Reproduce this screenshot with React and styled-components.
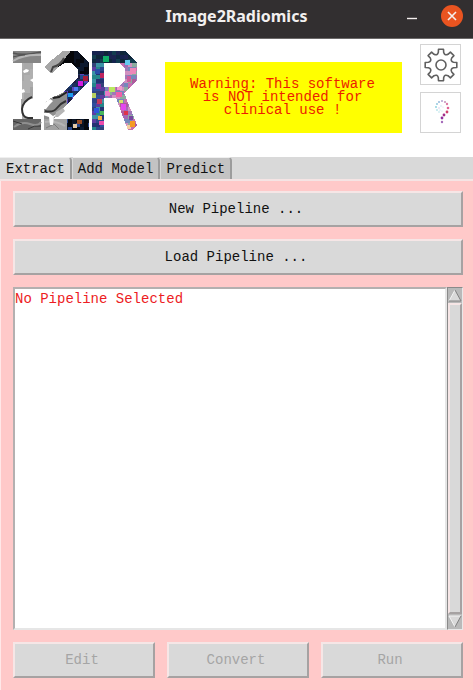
import React from "react";
import styled, { createGlobalStyle, css } from "styled-components";

const GlobalStyle = createGlobalStyle`
  *, *::before, *::after { box-sizing: border-box; }
  body { margin: 0; background: #ffc9c9; }
  button, textarea { font: inherit; }
`;

const Window = styled.div`
  display: flex;
  flex-direction: column;
  min-height: 100vh;
  font-family: "Liberation Mono", monospace;
  font-size: 14px;
  line-height: 16px;
  color: #111;
`;

const TitleBar = styled.header`
  display: grid;
  grid-template-columns: 72px 1fr 72px;
  align-items: center;
  height: 39px;
  padding-bottom: 6px;
  background: #322f30;
  border-bottom: 1px solid #6b6969;
`;

const Title = styled.h1`
  grid-column: 2;
  margin: 0;
  text-align: center;
  font: bold 16px/24px "Noto Sans", sans-serif;
  color: #f2f0ef;
`;

const WindowControls = styled.div`
  display: flex;
  align-items: center;
  justify-content: flex-end;
  gap: 23px;
  padding-right: 10px;
`;

const WindowButton = styled.button`
  display: grid;
  place-items: center;
  width: ${(p) => (p.$close ? "22px" : "12px")};
  height: 22px;
  padding: 0;
  border: 0;
  border-radius: ${(p) => (p.$close ? "50%" : "0")};
  color: #f5f0ee;
  background: ${(p) => (p.$close ? "#e95420" : "transparent")};
`;

const Banner = styled.section`
  display: flex;
  align-items: flex-start;
  height: 118px;
  padding: 5px 12px 0;
  background: #fff;
`;

const LogoArt = styled.svg`
  flex: none;
  margin-top: 7px;
`;

const Warning = styled.p`
  flex: 1;
  display: grid;
  place-items: center;
  height: 71px;
  margin: 18px 18px 0 27px;
  padding-right: 2px;
  background: #ff0;
  color: #ed1c00;
  line-height: 13px;
  text-align: center;
  white-space: pre-line;
`;

const ToolColumn = styled.div`
  display: grid;
  gap: 7px;
`;

const ToolButton = styled.button`
  display: grid;
  place-items: center;
  width: 41px;
  height: 41px;
  padding: 0;
  border: 1px solid #d4d4d4;
  background: #fff;
`;

const TabBar = styled.div`
  display: flex;
  height: 24px;
  background: #d9d9d9;
  border-bottom: 2px solid #f5e4e4;
`;

const Tab = styled.button`
  height: 22px;
  margin-right: 1px;
  padding: 0 5px;
  border: 0;
  border-top: 1px solid #efefef;
  border-right: 2px solid #9c9c9c;
  border-top-right-radius: 4px;
  background: ${(p) => (p.$active ? "#d9d9d9" : "#c3c3c3")};
  color: #111;
  &:first-child { padding-left: 6px; }
`;

const Panel = styled.main`
  flex: 1;
  display: flex;
  flex-direction: column;
  gap: 12px;
  padding: 10px 10px 12px 12px;
  border-left: 1px solid #ffe8e8;
`;

const raised = css`
  border: 2px solid;
  border-color: #f6e6e6 #a6a2a2 #a6a2a2 #f6e6e6;
`;

const PushButton = styled.button`
  flex: 1;
  height: 36px;
  padding: 0 4px 0 0;
  ${raised}
  background: #d9d9d9;
  color: #111;
  &:disabled { color: #a5a5a5; }
`;

const WideButton = styled(PushButton)`
  flex: none;
`;

const ListFrame = styled.div`
  flex: 1;
  display: flex;
  min-height: 120px;
`;

const ListText = styled.textarea`
  flex: 1;
  min-width: 0;
  padding: 2px 0;
  border: 2px solid;
  border-color: #b4b0b0 #e6e6e6 #e6e6e6 #b4b0b0;
  border-radius: 0;
  outline: 0;
  resize: none;
  overflow: hidden;
  background: #fff;
  color: #ed1c24;
`;

const ScrollBar = styled.div`
  display: flex;
  flex-direction: column;
  width: 16px;
  border: 1px solid;
  border-color: #8a8a8a #e8e8e8 #e8e8e8 #8a8a8a;
  background: #b9b9b9;
`;

const ScrollArrow = styled.button`
  height: 15px;
  padding: 0;
  border: 0;
  background: transparent;
  svg { display: block; }
`;

const ScrollThumb = styled.div`
  flex: 1;
  ${raised}
  background: #d9d9d9;
`;

const ButtonRow = styled.div`
  display: flex;
  gap: 12px;
`;

/* Slabs of the logo: top, bottom, then left and right edges at each of them. */
const SLABS = [
  [0, 12, 1, 29, 1, 29],
  [12, 48, 10, 21, 10, 21],
  [48, 68, 9, 21, 10, 21],
  [68, 79, 1, 29, 1, 29],

  [0, 12, 51, 66, 36, 77],
  [12, 16, 36, 53, 32, 46],
  [16, 22, 32, 46, 39, 40],
  [12, 19, 59, 77, 66, 77],
  [19, 26, 66, 77, 66, 77],
  [26, 30, 66, 77, 62, 77],
  [30, 42, 62, 77, 50, 65],
  [42, 47, 50, 65, 39, 61],
  [47, 52, 39, 61, 32, 56],
  [52, 68, 32, 56, 32, 42],
  [68, 79, 32, 77, 32, 77],

  [0, 12, 80, 113, 80, 125],
  [12, 79, 80, 92, 80, 92],
  [12, 18, 107, 125, 113, 125],
  [18, 29, 113, 125, 113, 125],
  [29, 36, 113, 125, 106, 118],
  [36, 43, 92, 118, 92, 112],
  [43, 47, 92, 113, 92, 114],
  [47, 74, 104, 114, 114, 125],
  [74, 79, 114, 125, 116, 120],
];

const PATCHES = [
  [91, 5, 6, 6, "#10ae68"],
  [113, 9, 5, 5, "#62c9ee"],
  [118, 17, 6, 6, "#ee86b8"],
  [66, 30, 5, 5, "#d51ae0"],
  [71, 25, 5, 5, "#a51d38"],
  [109, 53, 5, 6, "#e447ef"],
  [104, 41, 6, 5, "#f05fa6"],
  [118, 70, 5, 6, "#f59b23"],
  [115, 25, 4, 6, "#cf5d9b"],
  [83, 18, 5, 5, "#284fa8"],
  [88, 22, 4, 5, "#bf245e"],
  [84, 33, 5, 5, "#8a2f9e"],
  [80, 42, 4, 5, "#b4cf5f"],
  [85, 48, 5, 5, "#c23a5e"],
  [97, 36, 6, 5, "#b9e861"],
  [105, 35, 5, 4, "#f39bcb"],
  [93, 40, 5, 5, "#e87ac5"],
  [82, 57, 5, 5, "#2d55dc"],
  [88, 60, 4, 4, "#48b65d"],
  [86, 65, 4, 4, "#f4ad43"],
  [87, 70, 5, 4, "#ec4cac"],
  [65, 69, 5, 4, "#984d25"],
  [61, 73, 4, 4, "#e6c9a7"],
  [115, 74, 4, 4, "#f6cda0"],
  [112, 60, 4, 4, "#de344a"],
  [107, 49, 4, 3, "#d5e56b"],
  [117, 65, 4, 4, "#7747a0"],
  [62, 36, 4, 4, "#4b7bf0"],
  [56, 42, 5, 4, "#1c9bf0"],
];

const GREYS = ["#a9a9a9", "#b0b0b0", "#a3a3a3", "#adadad"];
const NIGHT = ["#03060c", "#0a1222", "#05080e", "#0c1a30"];
const BLUES = ["#224b8e", "#20315d", "#172d58", "#5c42b8", "#1b1b40"];
const DEEP = ["#0d2840", "#15234e", "#123c4e", "#1b2350", "#0f2638"];
const MIXED = ["#2d458b", "#25868a", "#5d3c9f", "#304f9d", "#243273", "#3c93a5", "#33437a"];
const BRIGHT = ["#a36ab4", "#c86fae", "#7588bb", "#9f78b8", "#b05a9a", "#8cab9f", "#d191c0"];

const pick = (list, x, y) => {
  const n = Math.imul(x * 31 + y * 57 + 11, 2654435761) >>> 8;
  return list[n % list.length];
};

function shade(x, y) {
  const patch = PATCHES.find(([px, py, w, h]) => x >= px && x < px + w && y >= py && y < py + h);
  if (patch) return patch[4];
  const cx = Math.floor(x / 4);
  const cy = Math.floor(y / 4);
  if (x < 30) {
    if (y < 12) return "#858585";
    if (y >= 68) return "#666666";
    return pick(GREYS, Math.floor(x / 6), Math.floor(y / 6));
  }
  if (x < 78) {
    if (y < 23) {
      if (x + y * 0.8 < 58) return "#a6a6a6";
      return x < 62 ? "#050609" : pick(NIGHT, cx, cy);
    }
    if (y >= 68) return x < 55 ? "#a2a2a2" : pick(NIGHT.concat("#27458b"), cx, cy);
    if (x < 55 && y > 40) return "#8f8f8f";
    return pick(BLUES, cx, cy);
  }
  if (y < 12) return pick(DEEP, cx, cy);
  return x < 93 ? pick(MIXED, cx, cy) : pick(BRIGHT, cx, cy);
}

function mosaic() {
  const tiles = [];
  SLABS.forEach(([top, bottom, l0, r0, l1, r1], slab) => {
    for (let y = top; y < bottom; y += 1) {
      const t = (y + 0.5 - top) / (bottom - top);
      const left = Math.round(l0 + (l1 - l0) * t);
      const right = Math.round(r0 + (r1 - r0) * t);
      let start = left;
      for (let x = left + 1; x <= right; x += 1) {
        if (x === right || shade(x, y) !== shade(start, y)) {
          tiles.push({ key: `${slab}-${y}-${start}`, x: start, y, width: x - start, fill: shade(start, y) });
          start = x;
        }
      }
    }
  });
  return tiles;
}

const TILES = mosaic();

function Logo() {
  return (
    <LogoArt width="126" height="80" viewBox="0 0 126 80" role="img" aria-label="I2R">
      <g shapeRendering="crispEdges">
        {TILES.map(({ key, ...tile }) => (
          <rect key={key} height="1" {...tile} />
        ))}
      </g>
      <g fill="none">
        <path d="M1 2q9 3 28-1" stroke="#555" strokeWidth="1.5" />
        <path d="M1 10q11-7 28-6" stroke="#b5b5b5" strokeWidth="2" />
        <path d="M1 6q6-2 12-2" stroke="#4f4f4f" />
        <path d="M2 76q8-6 16-3t11-2" stroke="#8f8f8f" strokeWidth="2" />
        <path d="M1 70l9 3M16 78q6-4 13-3" stroke="#393939" />
        <path d="M33 71q10-2 20 4" stroke="#b5b5b5" strokeWidth="2" />
        <path d="M34 77l8-4 5 5" stroke="#7c7c7c" />
        <path d="M39 21l2-5q8-2 11-9" stroke="#444" strokeWidth="2" />
        <path d="M41 47l6-1 8-5" stroke="#202020" strokeWidth="2" />
        <path d="M33 60q8 2 12-3t9-7" stroke="#333" strokeWidth="2" />
      </g>
      <path d="M11 55q5-10 11-7V67H14q-5-4-3-12Z" fill="#fff" />
      <path d="M20 46q-9 4-10 12q0 8 6 9h5" fill="none" stroke="#333" strokeWidth="2" />
      <path d="M32 52l6-4 3 2-3 3-4 5h-3zM32 62l5 0 4 3 9-5 7-3-3 11H44l-2-3-1 9h-3l-1-8-6-2z" fill="#fff" />
      <path d="M44 61l7-4 2 3-7 6h-3z" fill="#b5b5b5" />
      <path d="M11 20l3-2 3 1-1 2-4 1zM18 29l4-2v5zM9 39l3-1 1 3-3 1z" fill="#fff" />
    </LogoArt>
  );
}

const GEAR = (() => {
  const at = (deg, r) => {
    const a = (deg * Math.PI) / 180;
    return `${(18 + r * Math.sin(a)).toFixed(1)} ${(18 - r * Math.cos(a)).toFixed(1)}`;
  };
  let d = `M${at(-9, 16)}`;
  for (let i = 0; i < 8; i += 1) {
    const c = i * 45;
    d += `L${at(c + 9, 16)}L${at(c + 12, 12.8)}Q${at(c + 22.5, 9.8)} ${at(c + 33, 12.8)}L${at(c + 36, 16)}`;
  }
  return `${d}Z`;
})();

function GearIcon() {
  return (
    <svg width="36" height="36" viewBox="0 0 36 36" fill="none" stroke="#606060" strokeWidth="1.6" strokeLinejoin="round" aria-hidden="true">
      <path d={GEAR} />
      <circle cx="18" cy="18" r="5" />
    </svg>
  );
}

const DOTS = [
  [19, 16, 0.6, "#c8e4ef"], [17, 15, 0.6, "#b9dfed"], [16, 13, 0.7, "#c9bfe6"],
  [18, 11, 0.7, "#bfe3ee"], [20, 12, 0.6, "#d6d6f0"], [16, 17, 0.7, "#a5dce3"],
  [14, 15, 0.8, "#8ad3de"], [13, 12, 0.9, "#84cfdd"], [14, 9, 0.9, "#8ac4dc"],
  [16, 7, 1, "#96b8dc"], [19, 6, 1, "#b4a0d0"], [22, 7, 1.1, "#c995bd"],
  [24, 9, 1.2, "#dd7ba5"], [25, 13, 1.3, "#e06294"], [24, 17, 1.4, "#cf426e"],
  [21, 20, 1.4, "#a52d88"], [19, 23, 1.4, "#8f329e"], [19, 27, 1.2, "#a56aba"],
];

function HelpIcon() {
  return (
    <svg width="36" height="36" viewBox="0 0 36 36" aria-hidden="true">
      {DOTS.map(([cx, cy, r, fill]) => (
        <circle key={`${cx}-${cy}`} cx={cx} cy={cy} r={r} fill={fill} />
      ))}
    </svg>
  );
}

function Arrow({ down }) {
  return (
    <svg width="14" height="15" viewBox="0 0 14 15" aria-hidden="true">
      <path d={down ? "M1 2H13L7 13Z" : "M7 2L13 13H1Z"} fill="#d9d9d9" />
      <path d={down ? "M7 13L1 2H13" : "M1 13L7 2"} fill="none" stroke="#f4f4f4" />
      <path d={down ? "M7 13L13 2" : "M7 2L13 13H1"} fill="none" stroke="#808080" />
    </svg>
  );
}

const TABS = ["Extract", "Add Model", "Predict"];
const ACTIONS = ["Edit", "Convert", "Run"];

export default function App() {
  return (
    <Window>
      <GlobalStyle />
      <TitleBar>
        <Title>Image2Radiomics</Title>
        <WindowControls>
          <WindowButton aria-label="Minimize">
            <svg width="10" height="10" viewBox="0 0 10 10" aria-hidden="true">
              <path d="M0 7.5H10" stroke="currentColor" strokeWidth="1.4" />
            </svg>
          </WindowButton>
          <WindowButton $close aria-label="Close">
            <svg width="10" height="10" viewBox="0 0 10 10" aria-hidden="true">
              <path d="M1 1L9 9M9 1L1 9" stroke="currentColor" strokeWidth="1.6" />
            </svg>
          </WindowButton>
        </WindowControls>
      </TitleBar>
      <Banner>
        <Logo />
        <Warning>{"Warning: This software\nis NOT intended for\nclinical use !"}</Warning>
        <ToolColumn>
          <ToolButton aria-label="Settings"><GearIcon /></ToolButton>
          <ToolButton aria-label="Help"><HelpIcon /></ToolButton>
        </ToolColumn>
      </Banner>
      <TabBar role="tablist">
        {TABS.map((name, i) => (
          <Tab key={name} role="tab" aria-selected={i === 0} $active={i === 0}>{name}</Tab>
        ))}
      </TabBar>
      <Panel role="tabpanel" aria-label="Extract">
        <WideButton>New Pipeline ...</WideButton>
        <WideButton>Load Pipeline ...</WideButton>
        <ListFrame>
          <ListText readOnly aria-label="Pipeline" value="No Pipeline Selected" />
          <ScrollBar>
            <ScrollArrow aria-label="Scroll up"><Arrow /></ScrollArrow>
            <ScrollThumb />
            <ScrollArrow aria-label="Scroll down"><Arrow down /></ScrollArrow>
          </ScrollBar>
        </ListFrame>
        <ButtonRow>
          {ACTIONS.map((name) => (
            <PushButton key={name} disabled>{name}</PushButton>
          ))}
        </ButtonRow>
      </Panel>
    </Window>
  );
}
